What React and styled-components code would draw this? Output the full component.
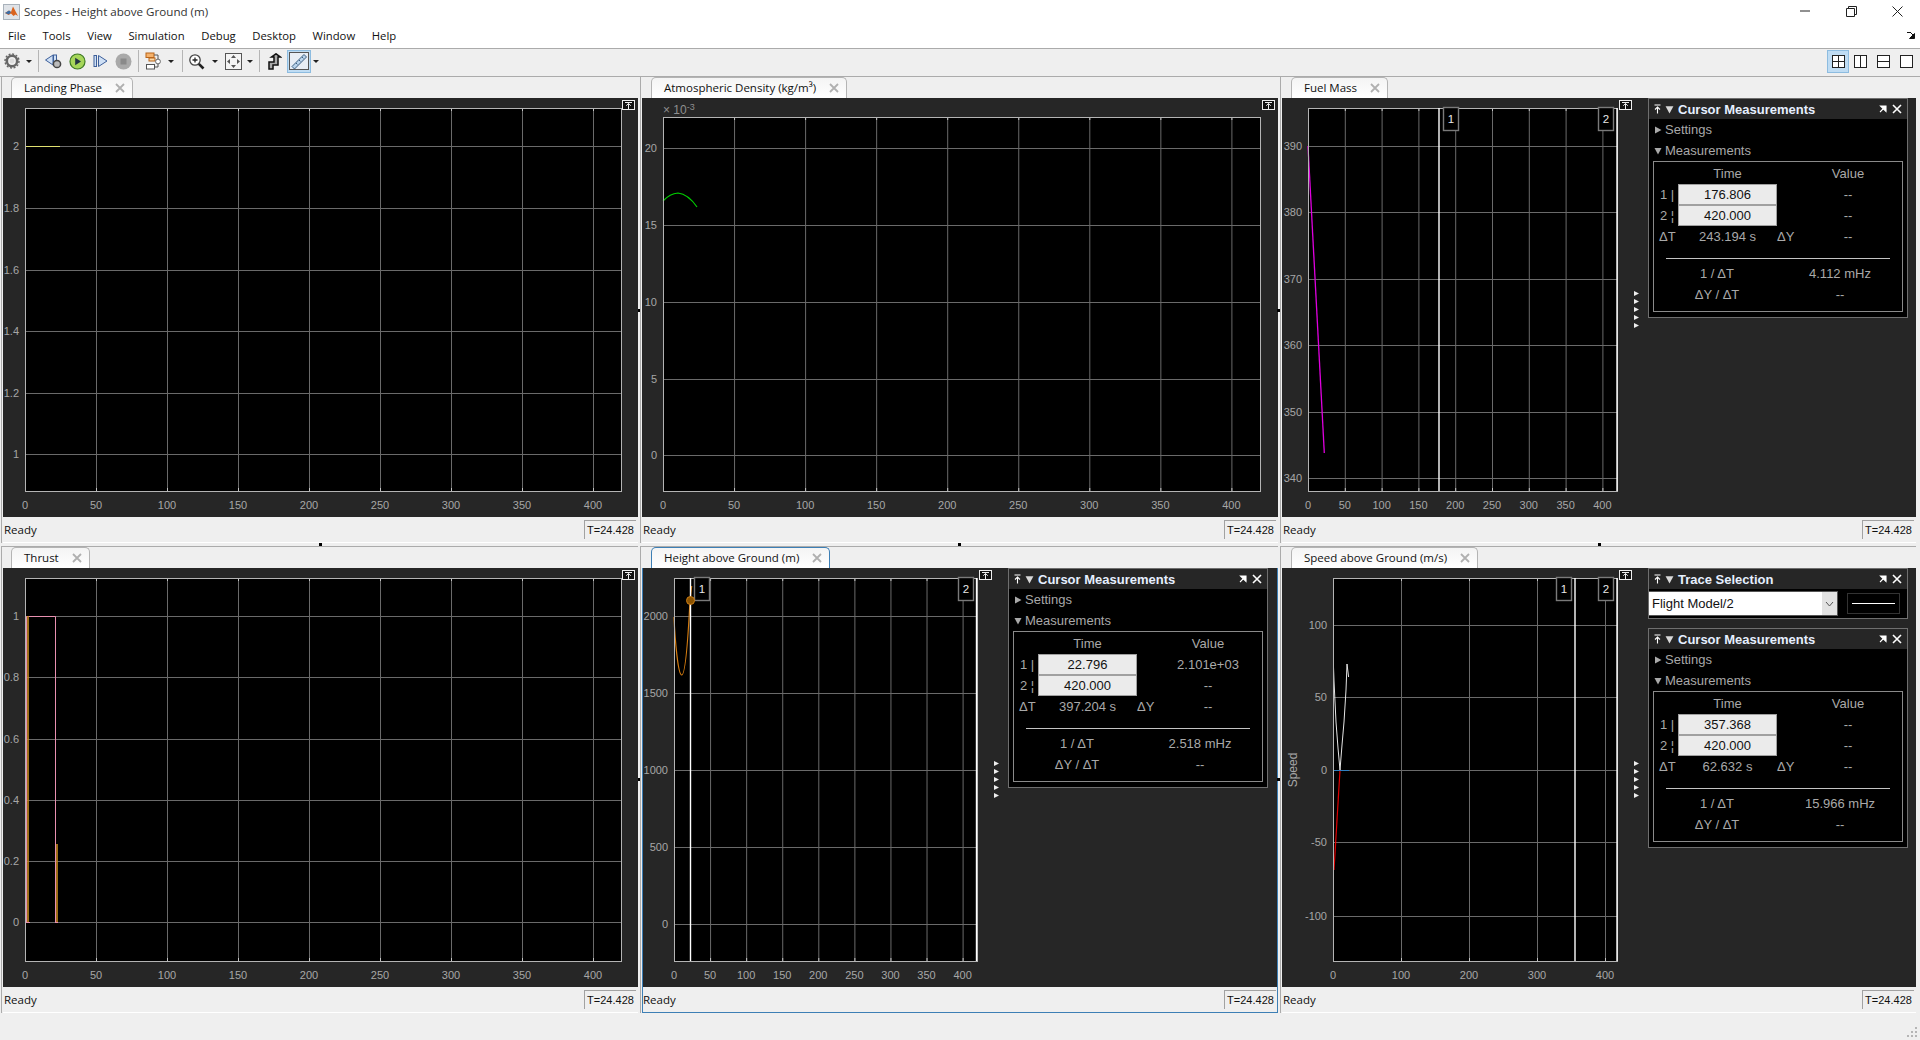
import React from 'react'
import styled, { createGlobalStyle } from 'styled-components'

const UI_FONT = '"Open Sans", "Noto Sans", sans-serif'
const PLOT_FONT = '"Liberation Sans", Arial, sans-serif'

const GlobalStyle = createGlobalStyle`
  html, body { margin: 0; padding: 0; height: 100%; overflow: hidden; background: #efefef; }
  #root { height: 100%; }
`

const Page = styled.div`
  width: 1920px;
  height: 1040px;
  background: #efefef;
  font-family: ${UI_FONT};
  font-size: 11.5px;
  color: #111;
  display: flex;
  flex-direction: column;
  position: relative;
  overflow: hidden;
`

const TitleBar = styled.div`
  height: 24px;
  box-sizing: border-box;
  padding: 0 0 2px 3px;
  background: #fff;
  display: flex;
  align-items: center;
`
const TitleText = styled.span`
  margin-left: 4px;
  color: #333;
  font-size: 11.6px;
`
const WindowButtons = styled.div`
  margin-left: auto;
  display: flex;
`
const WinBtn = styled.span`
  width: 46px;
  height: 20px;
  display: flex;
  align-items: center;
  justify-content: center;
`
const MenuBar = styled.div`
  height: 24px;
  box-sizing: border-box;
  padding: 0 0 1px 8px;
  background: #fff;
  display: flex;
  align-items: center;
  gap: 16.6px;
  font-size: 11.3px;
  position: relative;
`
const UndockCorner = styled.span`
  position: absolute;
  right: 5px;
  top: 8px;
  display: flex;
`
const ToolBar = styled.div`
  height: 29px;
  box-sizing: border-box;
  border-top: 1px solid #ababab;
  border-bottom: 1px solid #ababab;
  padding-bottom: 3px;
  display: flex;
  align-items: center;
`
const Tool = styled.span`
  width: ${p => p.$w}px;
  height: 23px;
  flex: none;
  display: flex;
  align-items: center;
  justify-content: center;
  box-sizing: border-box;
  background: ${p => (p.$active ? '#bfdcf3' : 'transparent')};
  border: 1px solid ${p => (p.$active ? '#8dbce0' : 'transparent')};
`
const Sep = styled.span`
  width: ${p => p.$w}px;
  flex: none;
  height: 22px;
  position: relative;
  &::after {
    content: '';
    position: absolute;
    left: 50%;
    top: 0;
    bottom: 0;
    width: 1px;
    background: #b5b5b5;
  }
`
const Arrow = styled.span`
  width: ${p => p.$w}px;
  flex: none;
  display: flex;
  justify-content: center;
  &::after {
    content: '';
    border-left: 3px solid transparent;
    border-right: 3px solid transparent;
    border-top: 3px solid #222;
  }
`
const LayoutGroup = styled.div`
  margin-left: auto;
  margin-right: 2px;
  display: flex;
  align-items: center;
`

const ScopeGrid = styled.div`
  display: grid;
  grid-template-columns: 637px 638px 636px;
  grid-template-rows: 466px 467px;
  column-gap: 2px;
  row-gap: 3px;
  padding-left: 1px;
`
const Cell = styled.section`
  position: relative;
  border-left: 1px solid #ababab;
  padding-left: 1px;
  display: flex;
  flex-direction: column;
`
const TabRow = styled.div`
  box-sizing: border-box;
  height: ${p => (p.$first ? 21 : 22)}px;
  padding-left: ${p => (p.$col === 0 ? 9 : 10)}px;
  border-top: ${p => (p.$first ? '0' : '1px solid #ababab')};
  margin-left: -2px;
  display: flex;
  align-items: flex-end;
`
const Tab = styled.div`
  height: 21px;
  box-sizing: border-box;
  margin-left: 1px;
  display: flex;
  align-items: center;
  gap: 13px;
  padding: 0 7px 1px 12px;
  background: linear-gradient(#f4f4f4, #fff);
  border: 1px solid ${p => (p.$selected ? '#3d7fb5' : '#b4b4b4')};
  border-bottom: 0;
  border-radius: 5px 5px 0 0;
  white-space: nowrap;
`
const TabClose = styled.span`
  display: flex;
`
const Body = styled.div`
  height: 419px;
  background: #262626;
  display: flex;
  align-items: flex-start;
  box-shadow: ${p => (p.$selected ? 'inset 1px 0 #3d7fb5, inset -1px 0 #3d7fb5' : 'none')};
`
const Chart = styled.svg`
  display: block;
  flex: none;
  font-family: ${PLOT_FONT};
`
const StatusBar = styled.div`
  height: 26px;
  box-sizing: border-box;
  border-bottom: 1px solid ${p => (p.$selected ? '#3d7fb5' : '#fff')};
  box-shadow: ${p => (p.$selected ? 'inset 1px 0 #3d7fb5, inset -1px 0 #3d7fb5' : 'none')};
  display: flex;
  align-items: center;
  justify-content: space-between;
  padding: 0 2px 0 1px;
`
const StatusTime = styled.span`
  width: 52px;
  height: 19px;
  box-sizing: border-box;
  border-top: 1px solid #a2a2a2;
  border-left: 1px solid #a2a2a2;
  font-family: ${PLOT_FONT};
  font-size: 11px;
  line-height: 18px;
  text-align: center;
`
const SashDot = styled.i`
  position: absolute;
  width: 3px;
  height: 3px;
  background: #000;
  left: ${p => p.$x}px;
  top: ${p => p.$y}px;
`
const Grip = styled.svg`
  position: absolute;
  right: 2px;
  bottom: 2px;
`

const SideColumn = styled.div`
  width: 260px;
  flex: none;
  display: flex;
  flex-direction: column;
  gap: 9px;
  font-family: ${PLOT_FONT};
`
const Dock = styled.div`
  box-sizing: border-box;
  width: 260px;
  border: 1px solid #6f6f6f;
  background: #000;
`
const DockHeader = styled.div`
  height: 20px;
  background: #262626;
  display: flex;
  align-items: center;
  padding: 0 5px 0 5px;
  color: #e6f0ff;
  font-weight: bold;
  font-size: 13px;
  gap: 4px;
`
const DockIcons = styled.span`
  margin-left: auto;
  display: flex;
  align-items: center;
  gap: 5px;
`
const SectionRow = styled.div`
  height: 21px;
  display: flex;
  align-items: center;
  gap: 3px;
  padding-left: 5px;
  color: #a9a9a9;
  font-size: 13px;
`
const InnerBox = styled.div`
  margin: 0 4px 5px 4px;
  height: 151px;
  box-sizing: border-box;
  border: 1px solid #8a8a8a;
  padding-top: 1px;
  color: #a9a9a9;
  font-size: 13px;
`
const MeasureGrid = styled.div`
  display: grid;
  grid-template-columns: 24px 99px 22px 98px;
  grid-auto-rows: 21px;
  align-items: center;
`
const Label = styled.span`
  padding-left: ${p => p.$pad || 0}px;
  text-align: ${p => p.$align || 'center'};
  white-space: nowrap;
  grid-column: ${p => p.$col || 'auto'};
`
const TimeInput = styled.span`
  height: 21px;
  box-sizing: border-box;
  background: #ebebeb;
  border: 1px solid #a0a0a0;
  color: #111;
  line-height: 19px;
  text-align: center;
`
const Rule = styled.div`
  height: 1px;
  background: #c4c4c4;
  margin: 11px 12px 4px 12px;
`
const RatioGrid = styled.div`
  display: grid;
  grid-template-columns: 126px 120px;
  grid-auto-rows: 21px;
  align-items: center;
  padding-left: 0;
`
const TraceBody = styled.div`
  height: 29px;
  display: flex;
  align-items: center;
  gap: 9px;
  color: #111;
`
const Select = styled.div`
  width: 189px;
  height: 25px;
  box-sizing: border-box;
  background: #fff;
  font-size: 13px;
  line-height: 24px;
  padding-left: 3px;
  display: flex;
  justify-content: space-between;
  border: 1px solid #555;
  border-left: 0;
`
const SelectArrow = styled.span`
  width: 15px;
  background: #e2e2e2;
  display: flex;
  align-items: center;
  justify-content: center;
`
const LineSwatch = styled.div`
  width: 53px;
  height: 21px;
  box-sizing: border-box;
  border: 1px solid #333;
  display: flex;
  align-items: center;
  justify-content: center;
  &::after {
    content: '';
    width: 43px;
    height: 1px;
    background: #fff;
  }
`

/* small drawings */
const MatlabIcon = () => (
  <svg width="17" height="17" viewBox="0 0 17 17">
    <rect x="0.5" y="1.5" width="16" height="15" fill="#dfe3e8" stroke="#a9b2bb" />
    <path d="M2 10 L6 7.5 L8 9 L10 3.5 L15 13 L12.5 11.5 L10.5 13 L8 10.5 L5.5 12 Z" fill="#d9631e" />
    <path d="M2 10 L6 7.5 L8 9 L6 11.5 Z" fill="#3b6ea8" />
  </svg>
)
const Gear = ({ size = 16, color = '#666' }) => (
  <svg width={size} height={size} viewBox="0 0 16 16">
    <circle cx="8" cy="8" r="5.2" fill="none" stroke={color} strokeWidth="2.6" />
    <circle cx="8" cy="8" r="7" fill="none" stroke={color} strokeWidth="1.4" strokeDasharray="2 1.66" />
    <circle cx="8" cy="8" r="2.4" fill="#ddd" />
  </svg>
)
const Rewind = () => (
  <svg width="20" height="18" viewBox="0 0 20 18">
    <path d="M9 3 L1.5 8 L9 13 Z" fill="#cfe0f5" stroke="#3d5f9a" />
    <rect x="9.5" y="3" width="3" height="10" fill="#cfe0f5" stroke="#3d5f9a" />
    <circle cx="13" cy="12" r="3.6" fill="#bbb" stroke="#444" strokeWidth="1.5" />
  </svg>
)
const Play = () => (
  <svg width="17" height="17" viewBox="0 0 17 17">
    <circle cx="8.5" cy="8.5" r="7.5" fill="#a6d65a" stroke="#3e7a24" strokeWidth="1.2" />
    <path d="M6.2 4.8 L12 8.5 L6.2 12.2 Z" fill="#234" />
  </svg>
)
const StepFwd = () => (
  <svg width="15" height="14" viewBox="0 0 15 14">
    <rect x="1" y="1.5" width="2.5" height="11" fill="#cfe0f5" stroke="#3d5f9a" />
    <path d="M5.5 1.5 L14 7 L5.5 12.5 Z" fill="#cfe0f5" stroke="#3d5f9a" />
  </svg>
)
const Stop = () => (
  <svg width="17" height="17" viewBox="0 0 17 17">
    <circle cx="8.5" cy="8.5" r="8" fill="#a9a9a9" />
    <rect x="5.5" y="5.5" width="6" height="6" fill="#8a8a8a" />
  </svg>
)
const Library = () => (
  <svg width="18" height="18" viewBox="0 0 18 18">
    <rect x="2" y="1" width="8" height="4.5" fill="#f6b26b" stroke="#b8651b" />
    <rect x="5" y="6" width="6" height="3" fill="#fbd9a8" stroke="#b8651b" />
    <circle cx="14" cy="9.5" r="2.4" fill="#fff" stroke="#666" />
    <rect x="2.5" y="12.5" width="8" height="4.5" fill="#fff" stroke="#555" />
    <path d="M10 3 H14 V7 M14 12 V15 H10.5" fill="none" stroke="#555" />
  </svg>
)
const Zoom = () => (
  <svg width="17" height="17" viewBox="0 0 17 17">
    <circle cx="7" cy="7" r="5.2" fill="#fff" stroke="#444" strokeWidth="1.3" />
    <path d="M4.5 7 H9.5 M7 4.5 V9.5" stroke="#222" strokeWidth="1.3" />
    <path d="M10.8 10.8 L15.5 15.5" stroke="#222" strokeWidth="2.6" />
  </svg>
)
const Fit = () => (
  <svg width="17" height="17" viewBox="0 0 17 17">
    <rect x="0.5" y="0.5" width="16" height="16" fill="#f4f4f4" stroke="#555" />
    <path d="M8.5 2 L11 5 H6 Z M8.5 15 L11 12 H6 Z M2 8.5 L5 6 V11 Z M15 8.5 L12 6 V11 Z" fill="#555" />
  </svg>
)
const StepUp = () => (
  <svg width="15" height="17" viewBox="0 0 15 17">
    <path d="M2 16 V9 H7 V4 H4.5 L9 0.8 L13.5 4 H11 V12 H6 V16 Z" fill="#aaa" stroke="#111" strokeWidth="1.5" />
  </svg>
)
const Measure = () => (
  <svg width="20" height="18" viewBox="0 0 20 18">
    <rect x="0.5" y="0.5" width="19" height="17" fill="#e8eef5" stroke="#555" />
    <path d="M3 14.5 L15 2.5 L17.5 5 L5.5 17 Z" fill="#b9d4ec" stroke="#3c5e80" />
    <path d="M7 11 l1.4 1.4 M10 8 l1.4 1.4 M13 5 l1.4 1.4" stroke="#3c5e80" />
  </svg>
)
const LayoutIcon = ({ cols, rows }) => (
  <svg width="15" height="15" viewBox="0 0 15 15">
    <rect x="1.5" y="1.5" width="12" height="12" fill="#fff" stroke="#222" />
    {cols && <path d="M7.5 1.5 V13.5" stroke="#222" />}
    {rows && <path d="M1.5 7.5 H13.5" stroke="#222" />}
  </svg>
)
const CloseX = ({ color = '#999', size = 10, width = 1.6 }) => (
  <svg width={size} height={size} viewBox="0 0 10 10">
    <path d="M1 1 L9 9 M9 1 L1 9" stroke={color} strokeWidth={width} />
  </svg>
)
const PinIcon = () => (
  <svg width="7" height="10" viewBox="0 0 7 10">
    <path d="M0.5 1 H6.5 M3.5 9.5 V2.5 M1 5.5 L3.5 3 L6 5.5" stroke="#fff" fill="none" strokeWidth="1.1" />
  </svg>
)
const Tri = ({ down, color = '#d8d8d8', size = 8 }) => (
  <svg width={size} height={size} viewBox="0 0 8 8" style={{ flex: 'none' }}>
    <path d={down ? 'M0.5 1 H7.5 L4 7.5 Z' : 'M1 0.5 L7.5 4 L1 7.5 Z'} fill={color} />
  </svg>
)
const PopOut = () => (
  <svg width="8" height="8" viewBox="0 0 8 8">
    <path d="M1.5 1 H7 V6.5 Z M4 4 L1 7" stroke="#fff" fill="#fff" strokeWidth="1.1" />
  </svg>
)

const CursorPanel = ({ t1, t2, dt, v1 = '--', rate }) => (
  <Dock>
    <DockHeader>
      <PinIcon />
      <Tri down size={9} />
      <span>Cursor Measurements</span>
      <DockIcons><PopOut /><CloseX color="#fff" /></DockIcons>
    </DockHeader>
    <SectionRow><Tri color="#a9a9a9" />Settings</SectionRow>
    <SectionRow><Tri down color="#a9a9a9" />Measurements</SectionRow>
    <InnerBox>
      <MeasureGrid>
        <Label $col={2}>Time</Label>
        <Label $col={4}>Value</Label>
        <Label $align="left" $pad={6}>1 |</Label>
        <TimeInput>{t1}</TimeInput>
        <Label $col={4}>{v1}</Label>
        <Label $align="left" $pad={6}>2 ¦</Label>
        <TimeInput>{t2}</TimeInput>
        <Label $col={4}>--</Label>
        <Label $align="left" $pad={5}>ΔT</Label>
        <Label>{dt} s</Label>
        <Label $align="left">ΔY</Label>
        <Label>--</Label>
      </MeasureGrid>
      <Rule />
      <RatioGrid>
        <Label>1 / ΔT</Label>
        <Label>{rate} mHz</Label>
        <Label>ΔY / ΔT</Label>
        <Label>--</Label>
      </RatioGrid>
    </InnerBox>
  </Dock>
)

const TraceSelection = () => (
  <Dock>
    <DockHeader>
      <PinIcon />
      <Tri down size={9} />
      <span>Trace Selection</span>
      <DockIcons><PopOut /><CloseX color="#fff" /></DockIcons>
    </DockHeader>
    <TraceBody>
      <Select>
        Flight Model/2
        <SelectArrow>
          <svg width="9" height="6" viewBox="0 0 9 6"><path d="M1 1 L4.5 5 L8 1" fill="none" stroke="#555" /></svg>
        </SelectArrow>
      </Select>
      <LineSwatch />
    </TraceBody>
  </Dock>
)

const range = (n, f) => Array.from({ length: n }, (_, i) => f(i))

// coordinates in a scope are page pixels: the viewBox starts where the dark area starts
function Plot({ s }) {
  const { ox, oy, w, plot } = s
  const h = 419
  const xs = s.xTicks.map(v => ({ v, px: plot.l + v * plot.sx }))
  return (
    <Chart width={w} height={h} viewBox={`${ox} ${oy} ${w} ${h}`}>
      <rect x={plot.l} y={plot.t} width={plot.r - plot.l} height={plot.b - plot.t} fill="#000" />
      {xs.filter(t => t.v > 0).map(t => (
        <line key={t.v} x1={t.px + 0.5} x2={t.px + 0.5} y1={plot.t} y2={plot.b} stroke="#6a6a6a" />
      ))}
      {s.yTicks.map(t => (
        <line key={t.label} x1={plot.l} x2={plot.r} y1={t.y + 0.5} y2={t.y + 0.5} stroke="#6a6a6a" />
      ))}
      {xs.filter(t => t.v > 0).map(t => (
        <g key={t.v} stroke="#c4c4c4">
          <line x1={t.px + 0.5} x2={t.px + 0.5} y1={plot.t} y2={plot.t + 3} />
          <line x1={t.px + 0.5} x2={t.px + 0.5} y1={plot.b - 3} y2={plot.b} />
        </g>
      ))}
      {s.traces}
      <rect x={plot.l + 0.5} y={plot.t + 0.5} width={plot.r - plot.l} height={plot.b - plot.t} fill="none" stroke="#b4b4b4" />
      <g fill="#a6a6a6" fontSize="11">
        {xs.map(t => (
          <text key={t.v} x={t.px} y={plot.b + 18} textAnchor="middle">{t.v}</text>
        ))}
        {s.yTicks.map(t => (
          <text key={t.label} x={plot.l - 6} y={t.y + 4} textAnchor="end">{t.label}</text>
        ))}
      </g>
      {s.extra}
      {s.cursors && s.cursors.map(c => (
        <g key={c.n}>
          <line x1={c.x} x2={c.x} y1={plot.t} y2={plot.b} stroke="#fff" strokeWidth="1.4" />
          <rect x={c.bx + 0.5} y={plot.t - 0.5} width="15" height="23" fill="#000" stroke="#7a7a7a" strokeWidth="1.4" />
          <text x={c.bx + 8} y={plot.t + 15} fill="#e8e8e8" fontSize="11.5" textAnchor="middle">{c.n}</text>
        </g>
      ))}
      {s.marker}
      <g transform={`translate(${s.undock[0]} ${s.undock[1]})`}>
        <rect x="0.5" y="0.5" width="12" height="9" fill="#111" stroke="#eee" />
        <path d="M3 2.5 H10 M6.5 9 V3.5 M4.2 5.7 L6.5 3.5 L8.8 5.7" stroke="#eee" fill="none" />
      </g>
      {s.dockArrows && range(5, i => (
        <path
          key={i}
          d={`M${s.dockArrows[0]} ${s.dockArrows[1] + i * 8} l5 2.5 l-5 2.5 Z`}
          fill="#eee"
        />
      ))}
    </Chart>
  )
}

const hundredTicks = range(9, i => i * 50)

const scopes = [
  {
    title: 'Landing Phase', ox: 3, oy: 98, w: 635,
    plot: { l: 25, t: 108, r: 621, b: 491, sx: 1.42 },
    xTicks: hundredTicks,
    yTicks: [['2', 146], ['1.8', 208], ['1.6', 270], ['1.4', 331], ['1.2', 393], ['1', 454]].map(([label, y]) => ({ label, y })),
    undock: [622, 100],
    traces: (
      <>
        <path d="M25.5 146.5 H60" stroke="#e0e070" fill="none" />
        <path d="M25.5 146 V454" stroke="#a8a838" fill="none" />
      </>
    ),
  },
  {
    title: 'Atmospheric Density (kg/m³)', ox: 642, oy: 98, w: 636,
    plot: { l: 663, t: 117, r: 1260, b: 491, sx: 1.421 },
    xTicks: hundredTicks,
    yTicks: [['20', 148], ['15', 225], ['10', 302], ['5', 379], ['0', 455]].map(([label, y]) => ({ label, y })),
    undock: [1262, 100],
    extra: (
      <text x="663" y="114" fill="#8f8f8f" fontSize="12">
        × 10<tspan dy="-4" fontSize="9">-3</tspan>
      </text>
    ),
    traces: <path d="M663 201 Q670 193.5 678 193 Q688 194 697 207" stroke="#00d000" strokeWidth="1.2" fill="none" />,
  },
  {
    title: 'Fuel Mass', ox: 1282, oy: 98, w: 366,
    plot: { l: 1308, t: 108, r: 1617, b: 491, sx: 0.736 },
    xTicks: hundredTicks,
    yTicks: [['390', 146], ['380', 212], ['370', 279], ['360', 345], ['350', 412], ['340', 478]].map(([label, y]) => ({ label, y })),
    cursors: [{ n: 1, x: 1439, bx: 1443 }, { n: 2, x: 1617, bx: 1598 }],
    undock: [1619, 100],
    dockArrows: [1634, 291],
    traces: <path d="M1308 146 L1324.3 453" stroke="#e000e0" strokeWidth="1.3" fill="none" />,
    side: <CursorPanel t1="176.806" t2="420.000" dt="243.194" rate="4.112" />,
  },
  {
    title: 'Thrust', ox: 3, oy: 568, w: 635,
    plot: { l: 25, t: 578, r: 621, b: 961, sx: 1.42 },
    xTicks: hundredTicks,
    yTicks: [['1', 616], ['0.8', 677], ['0.6', 739], ['0.4', 800], ['0.2', 861], ['0', 922]].map(([label, y]) => ({ label, y })),
    undock: [622, 570],
    traces: (
      <>
        <path d="M26.5 922 V616.5 H55.5 V922" stroke="#e890b0" fill="none" />
        <path d="M26 922.5 H30 M55 922.5 H58" stroke="#e890b0" fill="none" />
        <path d="M28 616 V922" stroke="#c88a20" strokeWidth="1.6" fill="none" />
        <path d="M57 844 V922" stroke="#c88a20" strokeWidth="1.6" fill="none" />
      </>
    ),
  },
  {
    title: 'Height above Ground (m)', ox: 642, oy: 568, w: 366, selected: true,
    plot: { l: 674, t: 578, r: 977, b: 961, sx: 0.7215 },
    xTicks: hundredTicks,
    yTicks: [['2000', 616], ['1500', 693], ['1000', 770], ['500', 847], ['0', 924]].map(([label, y]) => ({ label, y })),
    cursors: [{ n: 1, x: 690.5, bx: 694 }, { n: 2, x: 976.5, bx: 958 }],
    undock: [979, 570],
    dockArrows: [994, 761],
    traces: <path d="M674 617 C675 640 678 675 681.7 675 C685 675 688 640 690 601 L691.7 586" stroke="#d67d10" strokeWidth="1.2" fill="none" />,
    marker: <circle cx="690.5" cy="600.5" r="4" fill="#8a5200" stroke="#c87a14" />,
    side: <CursorPanel t1="22.796" t2="420.000" dt="397.204" v1="2.101e+03" rate="2.518" />,
  },
  {
    title: 'Speed above Ground (m/s)', ox: 1282, oy: 568, w: 366,
    plot: { l: 1333, t: 578, r: 1617, b: 961, sx: 0.68 },
    xTicks: [0, 100, 200, 300, 400],
    yTicks: [['100', 625], ['50', 697], ['0', 770], ['-50', 842], ['-100', 916]].map(([label, y]) => ({ label, y })),
    cursors: [{ n: 1, x: 1575, bx: 1556 }, { n: 2, x: 1617, bx: 1598 }],
    undock: [1619, 570],
    dockArrows: [1634, 761],
    extra: (
      <text fill="#a6a6a6" fontSize="12" textAnchor="middle" transform="translate(1297 770) rotate(-90)">Speed</text>
    ),
    traces: (
      <>
        <path d="M1333.5 667 L1334 681 L1336 722 L1338 748 L1340 770 L1342 745 L1344 722 L1346 690 L1347 664 L1348.6 677" stroke="#e6e6e6" fill="none" />
        <path d="M1340 770 L1334 870" stroke="#e00000" strokeWidth="1.2" fill="none" />
        <path d="M1333 770.5 H1349" stroke="#2f7fc0" fill="none" />
      </>
    ),
    side: (
      <>
        <TraceSelection />
        <CursorPanel t1="357.368" t2="420.000" dt="62.632" rate="15.966" />
      </>
    ),
  },
]

function Scope({ s, row, col }) {
  return (
    <Cell>
      <TabRow $first={row === 0} $col={col}>
        <Tab $selected={s.selected}>
          {s.title}
          <TabClose><CloseX color="#b0b0b0" size={10} width={1.8} /></TabClose>
        </Tab>
      </TabRow>
      <Body $selected={s.selected}>
        <Plot s={s} />
        {s.side && <SideColumn>{s.side}</SideColumn>}
      </Body>
      <StatusBar $selected={s.selected}>
        Ready
        <StatusTime>T=24.428</StatusTime>
      </StatusBar>
      {row === 0 && <SashDot $x={317} $y={466} />}
      {col < 2 && <SashDot $x={636} $y={232} />}
    </Cell>
  )
}

export default function App() {
  return (
    <Page>
      <GlobalStyle />
      <TitleBar>
        <MatlabIcon />
        <TitleText>Scopes - Height above Ground (m)</TitleText>
        <WindowButtons>
          <WinBtn><svg width="10" height="2" viewBox="0 0 10 2"><path d="M0 1 H10" stroke="#222" /></svg></WinBtn>
          <WinBtn><svg width="11" height="11" viewBox="0 0 11 11"><path d="M0.5 2.5 H8.5 V10.5 H0.5 Z M2.5 2.5 V0.5 H10.5 V8.5 H8.5" fill="none" stroke="#222" /></svg></WinBtn>
          <WinBtn><svg width="11" height="11" viewBox="0 0 11 11"><path d="M0.5 0.5 L10.5 10.5 M10.5 0.5 L0.5 10.5" stroke="#222" /></svg></WinBtn>
        </WindowButtons>
      </TitleBar>
      <MenuBar>
        {['File', 'Tools', 'View', 'Simulation', 'Debug', 'Desktop', 'Window', 'Help'].map(m => <span key={m}>{m}</span>)}
        <UndockCorner>
          <svg width="8" height="7" viewBox="0 0 8 7"><path d="M0 0.5 H3 M3 0 L7.5 4.5 M7.5 1.5 V6.5 H2.5 Z" stroke="#111" fill="#111" /></svg>
        </UndockCorner>
      </MenuBar>
      <ToolBar>
        <Tool $w={24}><Gear /></Tool>
        <Arrow $w={10} />
        <Sep $w={8} />
        <Tool $w={24}><Rewind /></Tool>
        <Tool $w={22}><Play /></Tool>
        <Tool $w={24}><StepFwd /></Tool>
        <Tool $w={22}><Stop /></Tool>
        <Sep $w={8} />
        <Tool $w={22}><Library /></Tool>
        <Arrow $w={14} />
        <Sep $w={7} />
        <Tool $w={23}><Zoom /></Tool>
        <Arrow $w={14} />
        <Tool $w={22}><Fit /></Tool>
        <Arrow $w={12} />
        <Sep $w={6} />
        <Tool $w={25}><StepUp /></Tool>
        <Tool $w={24} $active><Measure /></Tool>
        <Arrow $w={10} />
        <LayoutGroup>
          <Tool $w={22} $active><LayoutIcon cols rows /></Tool>
          <Tool $w={23}><LayoutIcon cols /></Tool>
          <Tool $w={23}><LayoutIcon rows /></Tool>
          <Tool $w={23}><LayoutIcon /></Tool>
        </LayoutGroup>
      </ToolBar>
      <ScopeGrid>
        {scopes.map((s, i) => <Scope key={s.title} s={s} row={i < 3 ? 0 : 1} col={i % 3} />)}
      </ScopeGrid>
      <Grip width="12" height="12" viewBox="0 0 12 12">
        <path d="M9 1h2v2H9z M5 5h2v2H5z M9 5h2v2H9z M1 9h2v2H1z M5 9h2v2H5z M9 9h2v2H9z" fill="#b5b5b5" />
      </Grip>
    </Page>
  )
}
